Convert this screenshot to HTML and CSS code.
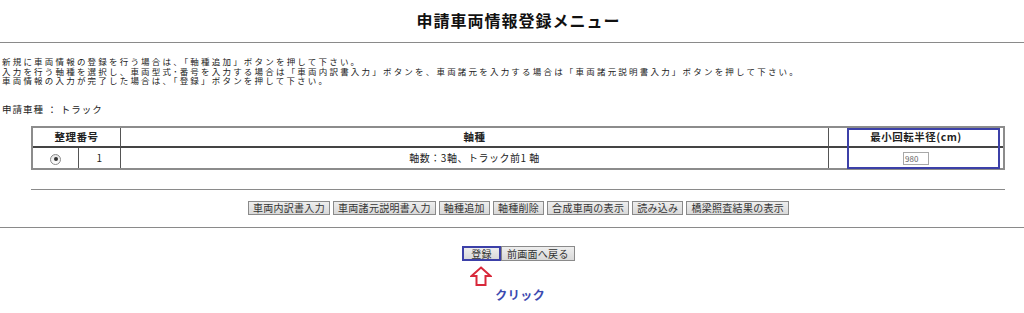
FILE: index.html
```html
<!DOCTYPE html>
<html lang="ja">
<head>
<meta charset="utf-8">
<title>申請車両情報登録メニュー</title>
<link rel="stylesheet" href="styles.css">
</head>
<body>
<div class="page">
  <h1 class="title">申請車両情報登録メニュー</h1>
  <hr class="rule">
  <div class="guide">
    <div class="guide-line">新規に車両情報の登録を行う場合は、「軸種追加」ボタンを押して下さい。</div>
    <div class="guide-line">入力を行う軸種を選択し、車両型式･番号を入力する場合は「車両内訳書入力」ボタンを、車両諸元を入力する場合は「車両諸元説明書入力」ボタンを押して下さい。</div>
    <div class="guide-line">車両情報の入力が完了した場合は、「登録」ボタンを押して下さい。</div>
  </div>
  <p class="kind">申請車種 ： トラック</p>
  <div class="table-wrap">
    <table class="axles">
      <colgroup>
        <col class="c-radio"><col class="c-no"><col class="c-type"><col class="c-radius">
      </colgroup>
      <thead>
        <tr>
          <th colspan="2">整理番号</th>
          <th>軸種</th>
          <th class="last">最小回転半径(cm)</th>
        </tr>
      </thead>
      <tbody>
        <tr>
          <td class="center"><span class="radio"><span class="radio-dot"></span></span></td>
          <td class="center">1</td>
          <td class="center">軸数：3軸、トラック前1 軸</td>
          <td class="center last"><span class="num-input">980</span></td>
        </tr>
      </tbody>
    </table>
    <div class="hl-box"></div>
  </div>
  <hr class="rule rule-inset">
  <div class="tools">
    <button class="btn">車両内訳書入力</button>
    <button class="btn">車両諸元説明書入力</button>
    <button class="btn">軸種追加</button>
    <button class="btn">軸種削除</button>
    <button class="btn">合成車両の表示</button>
    <button class="btn">読み込み</button>
    <button class="btn">橋梁照査結果の表示</button>
  </div>
  <hr class="rule">
  <div class="submit-area">
    <div class="submit-group">
      <div class="submit-buttons">
        <button class="btn btn-big btn-hl">登録</button>
        <button class="btn btn-big">前画面へ戻る</button>
      </div>
      <svg class="arrow" width="22" height="20" viewBox="0 0 22 20">
        <path d="M11 1.5 L20.5 10 L15.5 10 L15.5 19 L6.5 19 L6.5 10 L1.5 10 Z" fill="#fff" stroke="#d8283a" stroke-width="2" stroke-linejoin="miter"/>
      </svg>
      <div class="click">クリック</div>
    </div>
  </div>
</div>
</body>
</html>
```

FILE: styles.css
```css
html, body {
  margin: 0;
  padding: 0;
  background: #fff;
  overflow: hidden;
}

body {
  font-family: "Noto Sans CJK JP", "Liberation Sans", sans-serif;
  color: #222;
  font-size: 10px;
  letter-spacing: 0.5px;
}

.page {
  width: 1037px;
}

.title {
  margin: 10px 0 0;
  font-size: 16px;
  line-height: 20px;
  letter-spacing: 1px;
  font-weight: bold;
  text-align: center;
  color: #111;
}

.rule {
  border: 0;
  border-top: 1px solid #8a8a8a;
  height: 0;
  margin: 12px 0 0;
}

.guide {
  margin: 15px 0 0;
  padding-left: 2px;
  font-family: "Liberation Sans", "Noto Sans CJK JP", sans-serif;
  font-size: 8.5px;
  letter-spacing: 2.2px;
  white-space: nowrap;
}

.guide-line {
  height: 9.5px;
  line-height: 9.5px;
}

.kind {
  margin: 17px 0 0;
  padding-left: 2px;
  font-size: 9.5px;
  letter-spacing: 1px;
  line-height: 10px;
}

.table-wrap {
  position: relative;
  margin: 12px 32px 0 31px;
}

.axles {
  width: 100%;
  border-collapse: separate;
  border-spacing: 0;
  border: 2px solid #8c8c8c;
  table-layout: fixed;
}

.c-radio { width: 46px; }
.c-no { width: 42px; }
.c-type { width: 708px; }
.c-radius { width: auto; }

.axles th,
.axles td {
  padding: 0;
  border-right: 1px solid #555;
  text-align: center;
  font-size: 10px;
}

.axles th {
  height: 18px;
  font-weight: bold;
  font-size: 10.5px;
  border-bottom: 2px solid #444;
}

.axles td {
  height: 20px;
}

.axles .last {
  border-right: 0;
}

.radio {
  display: inline-flex;
  align-items: center;
  justify-content: center;
  width: 9px;
  height: 9px;
  border: 1px solid #8a8a8a;
  border-radius: 50%;
  background: linear-gradient(#e4e4e4, #fff);
  vertical-align: middle;
}

.radio-dot {
  width: 4px;
  height: 4px;
  border-radius: 50%;
  background: #333;
}

.num-input {
  display: inline-block;
  width: 23px;
  height: 11px;
  border: 1px solid #a8a8a8;
  font-size: 8px;
  line-height: 11px;
  color: #666;
  text-align: left;
  padding-left: 1px;
  letter-spacing: 0;
  vertical-align: middle;
}

.hl-box {
  position: absolute;
  left: 816px;
  top: 2px;
  width: 153px;
  height: 41px;
  box-sizing: border-box;
  border: 2px solid #3c40a8;
}

.rule-inset {
  margin: 19px 32px 0 31px;
}

.tools {
  display: flex;
  justify-content: center;
  gap: 3px;
  margin-top: 11px;
}

.btn {
  font-family: "Noto Sans CJK JP", "Liberation Sans", sans-serif;
  font-size: 10px;
  letter-spacing: 0.3px;
  line-height: 12px;
  height: 14px;
  padding: 0 4px;
  margin: 0;
  border: 1px solid #8a8a8a;
  background: linear-gradient(#eeeeee, #d9d9d9);
  color: #333;
  border-radius: 0;
}

.submit-area {
  display: flex;
  justify-content: center;
  margin-top: 18px;
}

.submit-group {
  display: flex;
  flex-direction: column;
  align-items: flex-start;
}

.submit-buttons {
  display: flex;
}

.btn-big {
  height: 15px;
  line-height: 13px;
  padding: 0 5px;
}

.btn-hl {
  border: 2px solid #3c40a8;
  line-height: 11px;
  padding: 0 7px;
}

.arrow {
  display: block;
  margin: 5px 0 0 8px;
}

.click {
  margin: 3px 0 0 33px;
  font-size: 12px;
  line-height: 12px;
  font-weight: bold;
  color: #3c4ab0;
  letter-spacing: 0.5px;
}
```
